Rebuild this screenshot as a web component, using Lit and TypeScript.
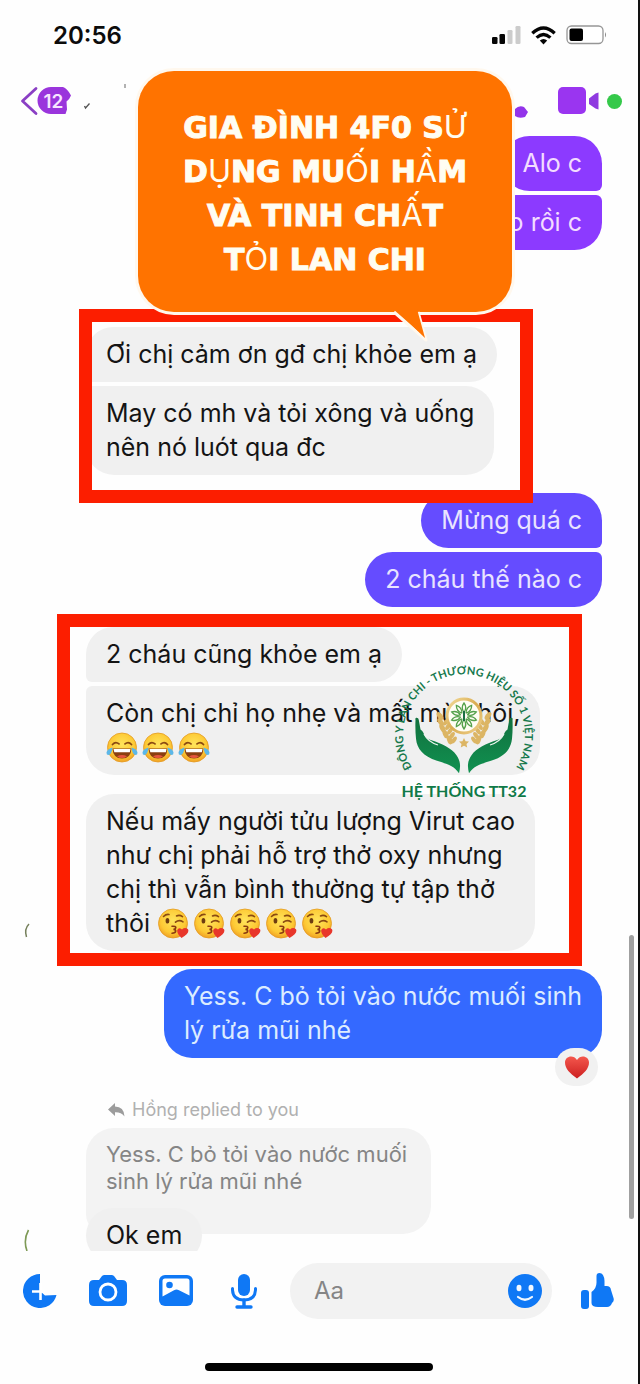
import { LitElement, html, css, svg } from "lit";
import { customElement } from "lit/decorators.js";

const joy = () => html`<svg class="emoji" viewBox="0 0 32 32" role="img" aria-label="Tears of joy">
  <circle cx="16" cy="15.5" r="14.5" fill="url(#face)" stroke="#e39a22" stroke-width=".8" />
  <path d="M6.5 12.5q3-3.4 6.5-.6M19 11.9q3.500-2.800 6.500.6" fill="none" stroke="#8a4a12" stroke-width="1.800" stroke-linecap="round" />
  <path d="M6.500 16.500h19q-.6 10-9.500 10t-9.500-10z" fill="#8b3f10" />
  <path d="M7.500 17h17l-.7 3.200H8.300z" fill="#fff" />
  <path d="M11 24.200q5-2.600 10 0-2 1.900-5 1.900t-5-1.900z" fill="#e5553e" />
  <path d="M6.500 15.500q-5.500 1.500-6 5-.2 2.500 2 2.600 3-.2 4-7.600zM25.500 15.500q5.500 1.500 6 5 .2 2.500-2 2.600-3-.2-4-7.600z" fill="#5cb7e8" />
</svg>`;

const kiss = () => html`<svg class="emoji" viewBox="0 0 32 32" role="img" aria-label="Blowing a kiss">
  <circle cx="16" cy="15.500" r="14.500" fill="url(#face)" stroke="#e39a22" stroke-width=".8" />
  <ellipse cx="10.500" cy="12.800" rx="1.900" ry="2.800" fill="#6d3c10" />
  <path d="M6.500 8.500q2.500-2.500 5.500-2M19.500 8q3-1.500 6 .6M18.500 14.200q3.500-3 7.500-.4" fill="none" stroke="#8a4a12" stroke-width="1.600" stroke-linecap="round" />
  <path d="M15 18.300q4.200-.3 3.800 1.600-.3 1.300-2.300 1.500 2.300.3 2.200 1.800-.2 2-3.700 2" fill="none" stroke="#8a3a10" stroke-width="1.600" stroke-linecap="round" />
  <path d="M24.500 30q-5-4.500-4.200-8 1.400-3 4.700-.5 3-2.800 6-.3 2 3.800-6.500 8.800z" fill="#e8362b" />
</svg>`;

const petals = [0, 36, 72, 108, 144, 180, 216, 252, 288, 324];

@customElement("chat-bubble")
export class ChatBubble extends LitElement {
  static properties = { side: {}, tone: {}, place: {} };
  declare side: string;
  declare tone: string;
  declare place: string;

  constructor() {
    super();
    this.side = "in";
    this.tone = "grey";
    this.place = "only";
  }

  static styles = css`
    :host { display: flex; }
    :host([side="out"]) { justify-content: flex-end; }
    .bubble {
      box-sizing: border-box;
      padding: 10px 20px 11px;
      border-radius: 28px;
      font-size: 25px;
      line-height: 34px;
      white-space: pre-line;
      color: #141414;
      background: #f0f0f0;
    }
    .violet { background: #8c3aff; color: #f3dcff; }
    .indigo { background: #654cff; color: #e9e4ff; }
    .blue { background: #3469ff; color: #dcecff; }
    .in.first { border-bottom-left-radius: 6px; }
    .in.last { border-top-left-radius: 6px; }
    .out.first { border-bottom-right-radius: 6px; }
    .out.last { border-top-right-radius: 6px; }
  `;

  render() {
    return html`<div class="bubble ${this.side} ${this.tone} ${this.place}"><slot></slot></div>`;
  }
}

@customElement("brand-mark")
export class BrandMark extends LitElement {
  static styles = css`
    :host { display: block; }
    .mark { display: block; width: 148px; height: 142px; overflow: visible; }
    .ring { font: 700 11px "Lato", sans-serif; fill: #16794c; text-anchor: middle; }
    .name { font: 700 16px "Lato", sans-serif; fill: #107a48; text-anchor: middle; }
  `;

  render() {
    return html`<svg class="mark" viewBox="390 662 148 142" role="img" aria-label="Hệ thống TT32">
      <defs>
        <path id="arc" d="M416 773A61 61 0 1 1 512 773" />
        <linearGradient id="gold" x1="0" y1="0" x2="1" y2="1">
          <stop offset="0" stop-color="#f4dc9a" /><stop offset=".5" stop-color="#d9ac52" /><stop offset="1" stop-color="#f0d08a" />
        </linearGradient>
        <linearGradient id="palm" x1="0" y1="0" x2="0" y2="1">
          <stop offset="0" stop-color="#12713f" /><stop offset="1" stop-color="#109150" />
        </linearGradient>
      </defs>
      <text class="ring"><textPath href="#arc" startOffset="50%">ĐÔNG Y LAN CHI - THƯƠNG HIỆU SỐ 1 VIỆT NAM</textPath></text>
      <g fill="#dcb564">
        ${[0, 1, 2, 3, 4].map(
          (i) => svg`<ellipse cx=${440 + i * i * 0.6} cy=${716 + i * 6} rx="2.5" ry="4.500" transform="rotate(${-35 + i * 4} ${440 + i * i * 0.6} ${716 + i * 6})" />
          <ellipse cx=${488 - i * i * 0.6} cy=${716 + i * 6} rx="2.5" ry="4.500" transform="rotate(${35 - i * 4} ${488 - i * i * 0.6} ${716 + i * 6})" />
          <ellipse cx=${446 + i * 2} cy=${722 + i * 4.500} rx="2" ry="4" transform="rotate(35 ${446 + i * 2} ${722 + i * 4.500})" />
          <ellipse cx=${482 - i * 2} cy=${722 + i * 4.500} rx="2" ry="4" transform="rotate(-35 ${482 - i * 2} ${722 + i * 4.500})" />`
        )}
        <path d="M464 738l1.600 3.200 3.400.4-2.500 2.400.7 3.500-3.200-1.700-3.200 1.700.7-3.500-2.500-2.400 3.400-.4z" />
      </g>
      <circle cx="464" cy="716" r="17" fill="#fffdf4" stroke="url(#gold)" stroke-width="3" />
      <g fill="none" stroke="#55a14b" stroke-width="1.300">
        ${petals.map((a) => svg`<path d="M464 712.500q-3.400-5 0-9.500q3.400 4.500 0 9.500" transform="rotate(${a} 464 716)" />`)}
      </g>
      <path d="M464 711v10" stroke="#1b6f43" stroke-width="2" />
      <path d="M415.500 720c-1-3 3-3 3.300 0l1.700 9.500c3 2 3 4.500 5 7 2 2.200 4 3 6 3.800 10 3.500 20 7.500 25 15 4.500 6.500 4 12 2.500 18-5-8-13-9.500-22-12.500-14-4.500-20-12-21-22-.6-6-.8-13-.5-18.800z" fill="url(#palm)" />
      <path d="M512.500 720c1-3-3-3-3.300 0l-1.700 9.500c-3 2-3 4.500-5 7-2 2.200-4 3-6 3.800-10 3.500-20 7.500-25 15-4.500 6.500-4 12-2.500 18 5-8 13-9.500 22-12.500 14-4.500 20-12 21-22 .6-6 .8-13 .5-18.800z" fill="url(#palm)" />
      <path d="M424 734q4 8 14 11M504 734q-4 8-14 11" fill="none" stroke="#eef6f0" stroke-width="1.200" />
      <text class="name" x="464" y="797">HỆ THỐNG TT32</text>
    </svg>`;
  }
}

@customElement("app-root")
export class AppRoot extends LitElement {
  static styles = css`
    :host {
      display: block;
      box-sizing: border-box;
      position: relative;
      min-height: 100vh;
      border-right: 2px solid #111;
      background: #fefefe;
      color: #141414;
      font-family: "Inter", "Liberation Sans", sans-serif;
      overflow: hidden;
    }
    svg { display: block; flex: none; }
    button {
      display: flex;
      align-items: center;
      justify-content: center;
      border: 0;
      padding: 0;
      background: none;
      font: inherit;
      color: inherit;
    }
    .defs { position: absolute; width: 0; height: 0; }

    .status {
      display: flex;
      align-items: center;
      gap: 10px;
      height: 70px;
      padding: 0 31px 0 53px;
      box-sizing: border-box;
    }
    .time { flex: 1; font-size: 24px; font-weight: 600; color: #0c0c0c; }

    .bar {
      display: flex;
      align-items: center;
      height: 62px;
      padding: 0 16px 0 20px;
    }
    .grow { flex: 1; }
    .video { margin: 0 8px 0 30px; }

    .chat {
      position: relative;
      display: flex;
      flex-direction: column;
      gap: 18px;
      padding: 4px 36px 0 86px;
    }
    .group { position: relative; display: flex; flex-direction: column; gap: 4px; }
    .gap-large { margin-bottom: 59px; }
    .gap-small { margin-top: 2px; }
    .apart { margin-top: 15px; }
    .frame { position: absolute; z-index: 1; border: 13px solid #fc1e00; }
    .frame-a { inset: -18px 69px -28px -7px; }
    .frame-b { inset: -13px 20px -15px -29px; }
    .mark { position: absolute; z-index: 2; right: 64px; top: 35px; }

    .emoji { display: inline-block; width: 32px; height: 32px; margin-right: 4px; vertical-align: -8px; }

    .callout {
      position: absolute;
      z-index: 3;
      top: 71px;
      left: 138px;
      right: 126px;
      box-sizing: border-box;
      margin: 0;
      padding: 35px 20px 30px;
      border-radius: 36px;
      background: #ff7300;
      box-shadow: 0 0 0 3px #fff8ee;
      color: #fffdf2;
      font-family: "DejaVu Sans", sans-serif;
      font-size: 30px;
      font-weight: 700;
      line-height: 44px;
      text-align: center;
      white-space: pre-line;
      -webkit-text-stroke: 1px #fffdf2;
    }
    .thin {
      font-family: "Inter", sans-serif;
      font-size: 31px;
      font-weight: 400;
      line-height: 1;
      -webkit-text-stroke: 0;
    }
    .tail { position: absolute; right: 80px; top: 238px; }

    .liked { position: relative; }
    .react {
      position: absolute;
      z-index: 1;
      right: 4px;
      bottom: -28px;
      width: 43px;
      height: 38px;
      border-radius: 19px;
      background: #f1f1f1;
    }
    .via {
      display: flex;
      align-items: center;
      gap: 7px;
      margin: 23px 0 -11px 22px;
      font-size: 18px;
      line-height: 22px;
      color: #b0b0b0;
    }
    .quote {
      align-self: flex-start;
      box-sizing: border-box;
      margin: 0;
      padding: 13px 24px 39px 20px;
      border-radius: 28px 28px 28px 20px;
      background: #f3f3f3;
      color: #858585;
      font-size: 22px;
      line-height: 27px;
      white-space: pre-line;
    }
    .answer { margin-top: -44px; }

    .scroll {
      position: absolute;
      z-index: 1;
      right: 4px;
      bottom: 44px;
      width: 5px;
      height: 284px;
      border-radius: 3px;
      background: #a0a0a0;
    }
    .sliver { position: absolute; left: 23px; }
    .sliver-a { bottom: 324px; }
    .sliver-b { bottom: 10px; }

    .composer {
      position: relative;
      z-index: 1;
      display: flex;
      align-items: center;
      margin-top: -12px;
      padding: 12px 7px 0 6px;
      background: #fefefe;
      color: #0f78f5;
    }
    .tool { width: 68px; height: 56px; }
    .field {
      display: flex;
      align-items: center;
      flex: 1;
      min-width: 0;
      height: 56px;
      box-sizing: border-box;
      margin: 0 11px 0 12px;
      padding: 0 10px 0 24px;
      border-radius: 28px;
      background: #f2f2f2;
    }
    .input {
      flex: 1;
      min-width: 0;
      border: 0;
      padding: 0;
      outline: 0;
      background: none;
      font: 400 24px/34px "Inter", "Liberation Sans", sans-serif;
      color: #141414;
    }
    .input::placeholder { color: #858585; opacity: 1; }
    .home {
      width: 228px;
      height: 8px;
      margin: 44px auto 12px;
      border-radius: 4px;
      background: #000;
    }
  `;

  render() {
    return html`
      <svg class="defs" aria-hidden="true">
        <defs>
          <radialGradient id="face" cx=".5" cy=".4" r=".6">
            <stop offset="0" stop-color="#ffe45c" /><stop offset=".7" stop-color="#fdc934" /><stop offset="1" stop-color="#f0a024" />
          </radialGradient>
        </defs>
      </svg>

      <header>
        <div class="status">
          <span class="time">20:56</span>
          <svg width="29" height="20" viewBox="0 0 29 20">
            <rect x="0" y="12" width="5.500" height="7" rx="1.300" fill="#050505" />
            <rect x="7.500" y="9" width="5.500" height="10" rx="1.300" fill="#050505" />
            <rect x="15.500" y="5" width="5" height="14" rx="1.300" fill="#ccc" />
            <rect x="23.500" y="1" width="5" height="18" rx="1.300" fill="#ccc" />
          </svg>
          <svg width="25" height="19" viewBox="0 0 25 19">
            <g fill="none" stroke="#050505" stroke-width="3.300">
              <path d="M1.300 7.200q11.200-10.400 22.400 0" />
              <path d="M5.600 11.600q6.900-6.400 13.800 0" />
            </g>
            <path d="M8.800 14.600q3.700-3 7.400 0l-3.700 3.900z" fill="#050505" />
          </svg>
          <svg width="41" height="20" viewBox="0 0 41 20">
            <rect x="1" y="1" width="36" height="17.500" rx="4.500" fill="#fff" stroke="#969696" stroke-width="1.300" />
            <rect x="3.500" y="3.500" width="13.500" height="12.500" rx="2" fill="#000" />
            <path d="M39 7q2 2.800 0 5.600z" fill="#888" />
          </svg>
        </div>
        <div class="bar">
          <button aria-label="Back">
            <svg width="110" height="34" viewBox="20 84 110 34">
              <path d="M36 88.500L22.500 101 36 113.500" fill="none" stroke="#8a3fc4" stroke-width="2.800" stroke-linecap="round" stroke-linejoin="round" />
              <path d="M51 87h12q4 1 8 8.500-1 3-4.500 6l.5 8-1.500 4.500H51a13.500 13.500 0 0 1 0-27z" fill="#9a35dc" />
              <text x="43.500" y="108" font-size="19" font-weight="600" fill="#f7e6ff">12</text>
              <path d="M84.500 106l1 2 4-4.500" fill="none" stroke="#555" stroke-width="1.300" />
              <path d="M125 84v4" stroke="#666" />
            </svg>
          </button>
          <span class="grow"></span>
          <svg width="14" height="34" viewBox="514 84 14 34"><path d="M515 109q4-4 9-2l4 5-3 5q-6 2-10-1z" fill="#9333ea" /></svg>
          <button class="video" aria-label="Video call">
            <svg width="41" height="28" viewBox="0 0 41 28">
              <rect width="28" height="27" rx="5" fill="#9a35f0" />
              <path d="M31 11.500L37.500 6.500 40.500 5.500V22.500L37.500 21.500 31 17z" fill="#8f3ae0" />
            </svg>
          </button>
          <svg width="15" height="15" viewBox="0 0 15 15"><circle cx="7.500" cy="7.500" r="7.500" fill="#35c94a" /></svg>
        </div>
      </header>

      <h1 class="callout">GIA ĐÌNH 4F0 S<span class="thin">Ử</span>
        D<span class="thin">Ụ</span>NG MU<span class="thin">Ố</span>I H<span class="thin">Ầ</span>M
        VÀ TINH CH<span class="thin">Ấ</span>T
        T<span class="thin">Ỏ</span>I LAN CHI<svg class="tail" width="40" height="34" viewBox="0 0 40 34">
          <path d="M2 3L34 31 26 3" fill="#ff7300" stroke="#fff8ee" stroke-width="3" stroke-linejoin="round" />
          <path d="M3 0L33 29 25 0z" fill="#ff7300" />
        </svg></h1>

      <main class="chat">
        <section class="group gap-large">
          <chat-bubble side="out" tone="violet" place="first">Alo c</chat-bubble>
          <chat-bubble side="out" tone="violet" place="last">o rồi c</chat-bubble>
        </section>

        <section class="group">
          <chat-bubble place="first">Ơi chị cảm ơn gđ chị khỏe em ạ</chat-bubble>
          <chat-bubble place="last">May có mh và tỏi xông và uống
nên nó luót qua đc</chat-bubble>
          <div class="frame frame-a"></div>
        </section>

        <section class="group">
          <chat-bubble side="out" tone="indigo" place="first">Mừng quá c</chat-bubble>
          <chat-bubble side="out" tone="indigo" place="last">2 cháu thế nào c</chat-bubble>
        </section>

        <section class="group gap-small">
          <chat-bubble place="first">2 cháu cũng khỏe em ạ</chat-bubble>
          <chat-bubble place="last">Còn chị chỉ họ nhẹ và mất mùi thôi,
${joy()}${joy()}${joy()}</chat-bubble>
          <chat-bubble class="apart">Nếu mấy người tửu lượng Virut cao
như chị phải hỗ trợ thở oxy nhưng
chị thì vẫn bình thường tự tập thở
thôi ${kiss()}${kiss()}${kiss()}${kiss()}${kiss()}</chat-bubble>
          <div class="frame frame-b"></div>
          <brand-mark class="mark"></brand-mark>
        </section>

        <section class="liked">
          <chat-bubble side="out" tone="blue">Yess. C bỏ tỏi vào nước muối sinh
lý rửa mũi nhé</chat-bubble>
          <button class="react" aria-label="Love">
            <svg width="26" height="24" viewBox="0 0 26 24">
              <defs><linearGradient id="heart" x1="0" y1="0" x2="0" y2="1"><stop offset="0" stop-color="#f4574d" /><stop offset="1" stop-color="#cc2020" /></linearGradient></defs>
              <path d="M13 23.500C6 18.500 1 13.500 1 7.500 1 1 9.500-1 13 5c3.500-6 12-4 12 2.500 0 6-5 11-12 16z" fill="url(#heart)" />
            </svg>
          </button>
        </section>

        <div class="via">
          <svg width="17" height="14" viewBox="0 0 17 14"><path d="M7 0v3.500q9 0 9.500 10Q13 9 7 9.300V13L0 6.500z" fill="#9c9c9c" /></svg>
          Hồng replied to you
        </div>
        <blockquote class="quote">Yess. C bỏ tỏi vào nước muối
sinh lý rửa mũi nhé</blockquote>
        <chat-bubble class="answer">Ok em</chat-bubble>

        <svg class="sliver sliver-a" width="8" height="16" viewBox="0 0 8 16"><path d="M6 1Q1 6 3.500 14" fill="none" stroke="#76805c" stroke-width="1.500" /></svg>
        <svg class="sliver sliver-b" width="8" height="24" viewBox="0 0 8 24"><path d="M5.500 1Q0 11 4 22" fill="none" stroke="#7e9a56" stroke-width="1.600" /></svg>
        <div class="scroll"></div>
      </main>

      <footer>
        <div class="composer">
          <button class="tool" aria-label="More">
            <svg width="34" height="34" viewBox="0 0 34 34">
              <path d="M17 0A17 17 0 1 0 33.500 21L22 21.500 17 17z" fill="currentColor" />
              <path d="M9 17.500h13M17.500 9v17" stroke="#fff" stroke-width="2.600" />
            </svg>
          </button>
          <button class="tool" aria-label="Camera">
            <svg width="38" height="32" viewBox="0 0 38 32">
              <path d="M5 5h5l3-4q1-1 2.500-1h7q1.500 0 2.500 1l3 4h5q5 0 5 5v16q0 5-5 5H5q-5 0-5-5V10q0-5 5-5z" fill="currentColor" />
              <circle cx="19" cy="17" r="8" fill="currentColor" stroke="#fff" stroke-width="2.800" />
            </svg>
          </button>
          <button class="tool" aria-label="Photos">
            <svg width="34" height="32" viewBox="0 0 34 32">
              <rect width="34" height="31" rx="6" fill="currentColor" />
              <path d="M3.500 6q0-2.500 2.500-2.500h22q2.500 0 2.500 2.500v14.500L20 15.200q-2.500-1.400-5 0L3.500 21.500z" fill="#fff" />
              <circle cx="10.500" cy="10" r="3.300" fill="currentColor" />
            </svg>
          </button>
          <button class="tool" aria-label="Voice">
            <svg width="28" height="35" viewBox="0 0 28 35">
              <rect x="8" y="0" width="12" height="22" rx="6" fill="currentColor" />
              <path d="M2.500 14.500v1.500q.5 10 11.500 10t11.500-10v-1.500" fill="none" stroke="currentColor" stroke-width="3" stroke-linecap="round" />
              <path d="M14 26v6M7 33h14" fill="none" stroke="currentColor" stroke-width="3.400" stroke-linecap="round" />
            </svg>
          </button>
          <div class="field">
            <input class="input" type="text" placeholder="Aa" aria-label="Message" />
            <button aria-label="Emoji">
              <svg width="34" height="34" viewBox="0 0 34 34">
                <circle cx="17" cy="17" r="17" fill="currentColor" />
                <ellipse cx="11" cy="14" rx="2.500" ry="3.300" fill="#f2f8ff" />
                <ellipse cx="23" cy="14" rx="2.500" ry="3.300" fill="#f2f8ff" />
                <path d="M10 23q7 5.500 14 0" fill="none" stroke="#f2f8ff" stroke-width="2.200" stroke-linecap="round" />
              </svg>
            </button>
          </div>
          <button class="tool" aria-label="Like">
            <svg width="34" height="36" viewBox="0 0 34 36">
              <rect x="1" y="17" width="8" height="19" rx="3" fill="currentColor" />
              <path d="M11.500 19q5.500-4 5-11V3q0-3 3-3 4.500 0 5 8v5h2q4 0 4.500 4l2.500 8q1 3-1.500 5-1.500 4-5 4h-9q-6.500 0-6.500-4z" fill="currentColor" />
            </svg>
          </button>
        </div>
        <div class="home"></div>
      </footer>
    `;
  }
}
